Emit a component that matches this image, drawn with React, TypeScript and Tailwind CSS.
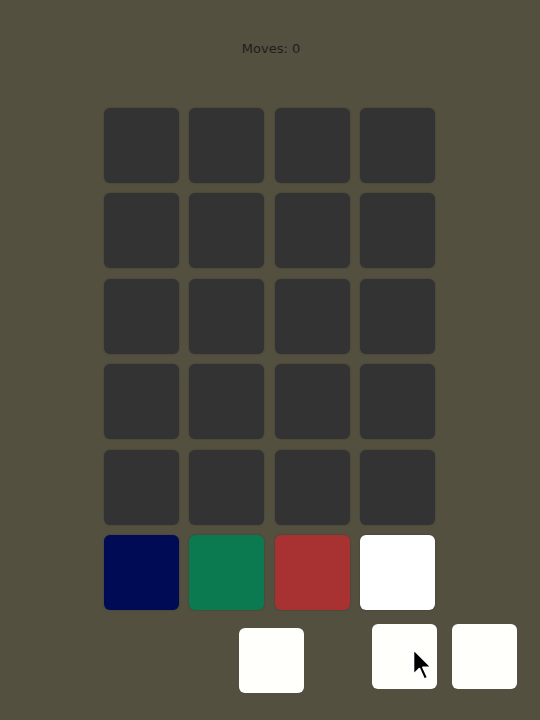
const GRID = Array.from({ length: 20 });
const PALETTE = ["bg-[#000b55]", "bg-[#0b7a50]", "bg-[#a83232]", "bg-white"];

export default function App() {
  return (
    <div className="relative w-[540px] h-[720px] overflow-hidden bg-[#535040] font-['Liberation_Sans',sans-serif]">
      <div className="flex flex-col items-center">
        <p className="mt-[41px] text-[13px] leading-[16px] text-[#1e1e1e] pl-[2px] font-['DejaVu_Sans',sans-serif]">Moves: 0</p>
        <div className="mt-[51px] grid grid-cols-[repeat(4,75px)] gap-[10.4px] mr-[1px]">
          {GRID.map((_, i) => (
            <div key={i} className="h-[75px] rounded-[6px] bg-[#333333] shadow-[0_0_2px_rgba(0,0,0,0.25)]" />
          ))}
          {PALETTE.map((c, i) => (
            <div key={"p" + i} className={`h-[75px] rounded-[6px] ${c} shadow-[0_0_2px_rgba(0,0,0,0.25)]`} />
          ))}
        </div>
      </div>

      {/* loose pieces */}
      <div className="absolute left-[239px] top-[628px] w-[65px] h-[65px] rounded-[6px] bg-[#fffffc]" />
      <div className="absolute left-[372px] top-[624px] w-[65px] h-[65px] rounded-[6px] bg-[#fffffc]" />
      <div className="absolute left-[452px] top-[624px] w-[65px] h-[65px] rounded-[6px] bg-[#fffffc]" />

      {/* cursor */}
      <svg className="absolute left-[411px] top-[648px]" width="24" height="34" viewBox="0 0 20 28">
        <path d="M2 1 L2 22 L7 17 L11 26 L14 24.5 L10 16 L17 16 Z" fill="#000" stroke="#fff" strokeWidth="1.5" strokeLinejoin="round" />
      </svg>
    </div>
  );
}
